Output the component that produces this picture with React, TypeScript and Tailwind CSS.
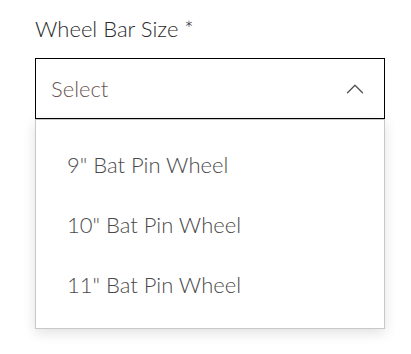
import { ChevronUp } from "lucide-react";

const options = ['9" Bat Pin Wheel', '10" Bat Pin Wheel', '11" Bat Pin Wheel'];

export default function App() {
    return (
        <div className="min-h-[354px] bg-white pl-[35px] pr-[26px] pt-[14px] font-['Lato',sans-serif]">
            <label className="block text-[22px] font-light leading-[30px] text-[#2a2a2a]">Wheel Bar Size *</label>
            <div className="mt-[14px] flex h-[61px] items-center justify-between border border-black pl-[15px] pr-[14px]">
                <span className="text-[22px] font-light text-[#6a5550]">Select</span>
                <ChevronUp className="h-[30px] w-[30px] text-[#555]" strokeWidth={1.1} />
            </div>
            <ul className="h-[210px] border border-[#c8c8c8] bg-white pb-[15px] pt-[14px] shadow-[0_4px_12px_rgba(0,0,0,0.12)]">
                {options.map((o) => (
                    <li key={o} className="flex h-[60px] items-center pl-[31px] text-[22px] font-light text-[#4a4a4a]">
                        {o}
                    </li>
                ))}
            </ul>
        </div>
    );
}
